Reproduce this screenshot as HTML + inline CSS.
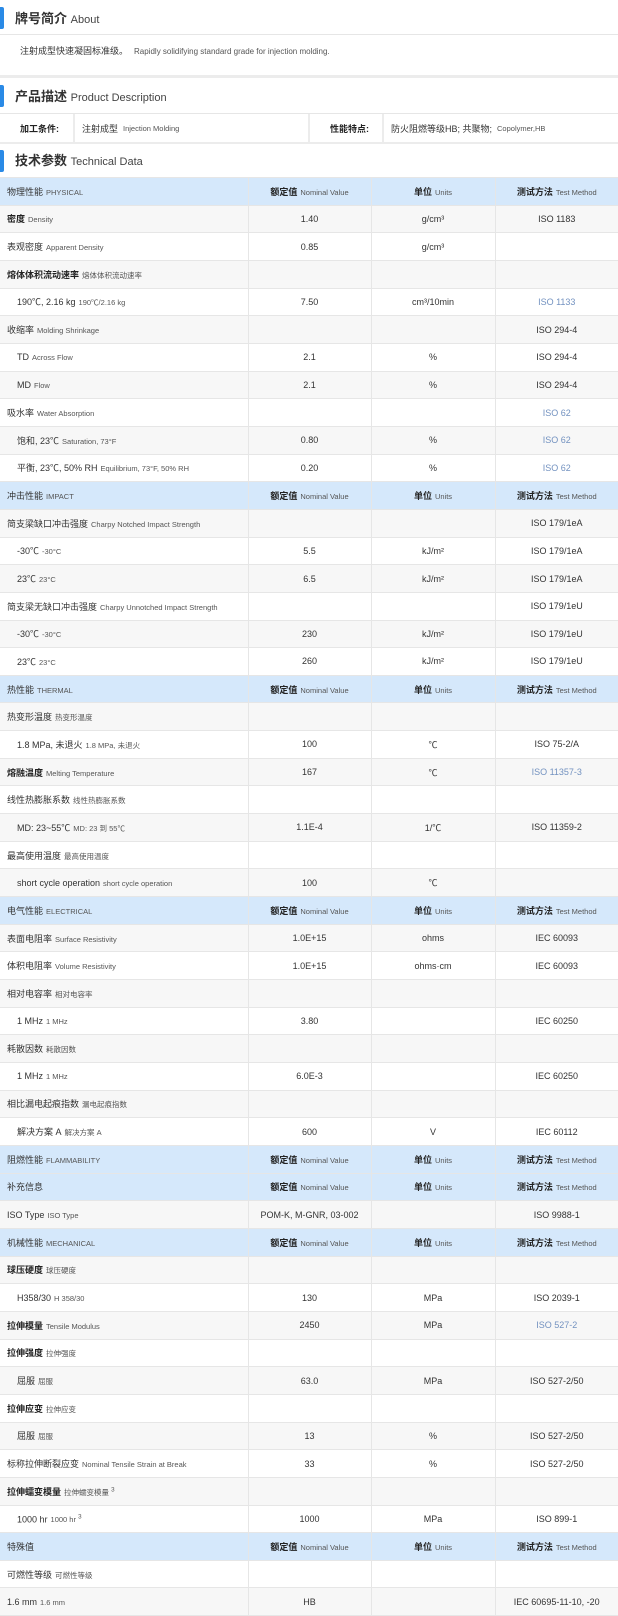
<!DOCTYPE html>
<html><head><meta charset="utf-8"><style>
*{margin:0;padding:0;box-sizing:border-box}
body{width:618px;height:1613px;overflow:hidden;background:#fff;font-family:"Liberation Sans","Noto Sans CJK SC",sans-serif;color:#333}
.sec{position:relative;height:35px;border-bottom:1px solid #e6e6e6}
.sec .bar{position:absolute;left:0;top:7px;width:4px;height:22px;background:#2a8ae6;border-radius:0 2px 2px 0}
.sec .t{position:absolute;left:15px;top:8px;font-size:13px;color:#333;font-weight:bold;white-space:nowrap}
.sec .t small{font-size:11px;font-weight:normal;color:#444}
.gap{height:3px;background:#ececec}
.about{height:40px;font-size:9px;padding:9px 0 0 20px;color:#333}
.about span{font-size:8px;color:#555;margin-left:6px}
.desc{height:30px;display:flex;font-size:9px;border-bottom:2px solid #ececec}
.desc div{border-right:2px solid #ececec;display:flex;align-items:center}
.desc span{font-size:7.5px;color:#555;margin-left:5px}
table{border-collapse:collapse;table-layout:fixed;width:618px}
td{height:27.67px;border:1px solid #e6e6e6;font-size:9px;color:#333;white-space:nowrap;overflow:hidden;text-align:center}
td:first-child{text-align:left;padding-left:7px;border-left:none}
td:last-child{border-right:none}
td small{font-size:7.5px;color:#555;margin-left:3px}
tr.g td{background:#f7f7f7}
tr.h td{background:#d5e8fb}
tr.h td b{font-weight:bold;color:#222}
td.i{padding-left:17px!important}
.bl{color:#7392c0}
b{font-weight:bold;color:#222}
</style></head><body>
<div class="sec"><div class="bar"></div><div class="t">牌号简介 <small>About</small></div></div>
<div class="about">注射成型快速凝固标准级。<span>Rapidly solidifying standard grade for injection molding.</span></div>
<div class="gap"></div>
<div class="sec" style="height:36px"><div class="bar"></div><div class="t">产品描述 <small>Product Description</small></div></div>
<div class="desc">
<div style="width:75px;padding-left:20px"><b>加工条件:</b></div>
<div style="width:235px;padding-left:7px">注射成型<span>Injection Molding</span></div>
<div style="width:74px;padding-left:20px"><b>性能特点:</b></div>
<div style="flex:1;padding-left:7px;border-right:none">防火阻燃等级HB; 共聚物;<span>Copolymer,HB</span></div>
</div>
<div class="sec" style="height:33px;border:none"><div class="bar" style="top:6px"></div><div class="t" style="top:6px">技术参数 <small>Technical Data</small></div></div>
<table>
<colgroup><col style="width:248px"><col style="width:123px"><col style="width:124px"><col style="width:123px"></colgroup>
<tr class="h"><td>物理性能<small>PHYSICAL</small></td><td><b>额定值</b><small>Nominal Value</small></td><td><b>单位</b><small>Units</small></td><td><b>测试方法</b><small>Test Method</small></td></tr>
<tr class="g"><td><b>密度</b><small>Density</small></td><td>1.40</td><td>g/cm³</td><td>ISO 1183</td></tr>
<tr><td>表观密度<small>Apparent Density</small></td><td>0.85</td><td>g/cm³</td><td></td></tr>
<tr class="g"><td><b>熔体体积流动速率</b><small>熔体体积流动速率</small></td><td></td><td></td><td></td></tr>
<tr><td class="i">190℃, 2.16 kg<small>190℃/2.16 kg</small></td><td>7.50</td><td>cm³/10min</td><td class="bl">ISO 1133</td></tr>
<tr class="g"><td>收缩率<small>Molding Shrinkage</small></td><td></td><td></td><td>ISO 294-4</td></tr>
<tr><td class="i">TD<small>Across Flow</small></td><td>2.1</td><td>%</td><td>ISO 294-4</td></tr>
<tr class="g"><td class="i">MD<small>Flow</small></td><td>2.1</td><td>%</td><td>ISO 294-4</td></tr>
<tr><td>吸水率<small>Water Absorption</small></td><td></td><td></td><td class="bl">ISO 62</td></tr>
<tr class="g"><td class="i">饱和, 23℃<small>Saturation, 73°F</small></td><td>0.80</td><td>%</td><td class="bl">ISO 62</td></tr>
<tr><td class="i">平衡, 23℃, 50% RH<small>Equilibrium, 73°F, 50% RH</small></td><td>0.20</td><td>%</td><td class="bl">ISO 62</td></tr>
<tr class="h"><td>冲击性能<small>IMPACT</small></td><td><b>额定值</b><small>Nominal Value</small></td><td><b>单位</b><small>Units</small></td><td><b>测试方法</b><small>Test Method</small></td></tr>
<tr class="g"><td>简支梁缺口冲击强度<small>Charpy Notched Impact Strength</small></td><td></td><td></td><td>ISO 179/1eA</td></tr>
<tr><td class="i">-30℃<small>-30°C</small></td><td>5.5</td><td>kJ/m²</td><td>ISO 179/1eA</td></tr>
<tr class="g"><td class="i">23℃<small>23°C</small></td><td>6.5</td><td>kJ/m²</td><td>ISO 179/1eA</td></tr>
<tr><td>简支梁无缺口冲击强度<small>Charpy Unnotched Impact Strength</small></td><td></td><td></td><td>ISO 179/1eU</td></tr>
<tr class="g"><td class="i">-30℃<small>-30°C</small></td><td>230</td><td>kJ/m²</td><td>ISO 179/1eU</td></tr>
<tr><td class="i">23℃<small>23°C</small></td><td>260</td><td>kJ/m²</td><td>ISO 179/1eU</td></tr>
<tr class="h"><td>热性能<small>THERMAL</small></td><td><b>额定值</b><small>Nominal Value</small></td><td><b>单位</b><small>Units</small></td><td><b>测试方法</b><small>Test Method</small></td></tr>
<tr class="g"><td>热变形温度<small>热变形温度</small></td><td></td><td></td><td></td></tr>
<tr><td class="i">1.8 MPa, 未退火<small>1.8 MPa, 未退火</small></td><td>100</td><td>℃</td><td>ISO 75-2/A</td></tr>
<tr class="g"><td><b>熔融温度</b><small>Melting Temperature</small></td><td>167</td><td>℃</td><td class="bl">ISO 11357-3</td></tr>
<tr><td>线性热膨胀系数<small>线性热膨胀系数</small></td><td></td><td></td><td></td></tr>
<tr class="g"><td class="i">MD: 23~55℃<small>MD: 23 到 55℃</small></td><td>1.1E-4</td><td>1/℃</td><td>ISO 11359-2</td></tr>
<tr><td>最高使用温度<small>最高使用温度</small></td><td></td><td></td><td></td></tr>
<tr class="g"><td class="i">short cycle operation<small>short cycle operation</small></td><td>100</td><td>℃</td><td></td></tr>
<tr class="h"><td>电气性能<small>ELECTRICAL</small></td><td><b>额定值</b><small>Nominal Value</small></td><td><b>单位</b><small>Units</small></td><td><b>测试方法</b><small>Test Method</small></td></tr>
<tr class="g"><td>表面电阻率<small>Surface Resistivity</small></td><td>1.0E+15</td><td>ohms</td><td>IEC 60093</td></tr>
<tr><td>体积电阻率<small>Volume Resistivity</small></td><td>1.0E+15</td><td>ohms·cm</td><td>IEC 60093</td></tr>
<tr class="g"><td>相对电容率<small>相对电容率</small></td><td></td><td></td><td></td></tr>
<tr><td class="i">1 MHz<small>1 MHz</small></td><td>3.80</td><td></td><td>IEC 60250</td></tr>
<tr class="g"><td>耗散因数<small>耗散因数</small></td><td></td><td></td><td></td></tr>
<tr><td class="i">1 MHz<small>1 MHz</small></td><td>6.0E-3</td><td></td><td>IEC 60250</td></tr>
<tr class="g"><td>相比漏电起痕指数<small>漏电起痕指数</small></td><td></td><td></td><td></td></tr>
<tr><td class="i">解决方案 A<small>解决方案 A</small></td><td>600</td><td>V</td><td>IEC 60112</td></tr>
<tr class="h"><td>阻燃性能<small>FLAMMABILITY</small></td><td><b>额定值</b><small>Nominal Value</small></td><td><b>单位</b><small>Units</small></td><td><b>测试方法</b><small>Test Method</small></td></tr>
<tr class="h"><td>补充信息</td><td><b>额定值</b><small>Nominal Value</small></td><td><b>单位</b><small>Units</small></td><td><b>测试方法</b><small>Test Method</small></td></tr>
<tr class="g"><td>ISO Type<small>ISO Type</small></td><td>POM-K, M-GNR, 03-002</td><td></td><td>ISO 9988-1</td></tr>
<tr class="h"><td>机械性能<small>MECHANICAL</small></td><td><b>额定值</b><small>Nominal Value</small></td><td><b>单位</b><small>Units</small></td><td><b>测试方法</b><small>Test Method</small></td></tr>
<tr class="g"><td><b>球压硬度</b><small>球压硬度</small></td><td></td><td></td><td></td></tr>
<tr><td class="i">H358/30<small>H 358/30</small></td><td>130</td><td>MPa</td><td>ISO 2039-1</td></tr>
<tr class="g"><td><b>拉伸模量</b><small>Tensile Modulus</small></td><td>2450</td><td>MPa</td><td class="bl">ISO 527-2</td></tr>
<tr><td><b>拉伸强度</b><small>拉伸强度</small></td><td></td><td></td><td></td></tr>
<tr class="g"><td class="i">屈服<small>屈服</small></td><td>63.0</td><td>MPa</td><td>ISO 527-2/50</td></tr>
<tr><td><b>拉伸应变</b><small>拉伸应变</small></td><td></td><td></td><td></td></tr>
<tr class="g"><td class="i">屈服<small>屈服</small></td><td>13</td><td>%</td><td>ISO 527-2/50</td></tr>
<tr><td>标称拉伸断裂应变<small>Nominal Tensile Strain at Break</small></td><td>33</td><td>%</td><td>ISO 527-2/50</td></tr>
<tr class="g"><td><b>拉伸蠕变模量</b><small>拉伸蠕变模量 <sup>3</sup></small></td><td></td><td></td><td></td></tr>
<tr><td class="i">1000 hr<small>1000 hr <sup>3</sup></small></td><td>1000</td><td>MPa</td><td>ISO 899-1</td></tr>
<tr class="h"><td>特殊值</td><td><b>额定值</b><small>Nominal Value</small></td><td><b>单位</b><small>Units</small></td><td><b>测试方法</b><small>Test Method</small></td></tr>
<tr><td>可燃性等级<small>可燃性等级</small></td><td></td><td></td><td></td></tr>
<tr class="g"><td>1.6 mm<small>1.6 mm</small></td><td>HB</td><td></td><td>IEC 60695-11-10, -20</td></tr>
</table>
</body></html>
